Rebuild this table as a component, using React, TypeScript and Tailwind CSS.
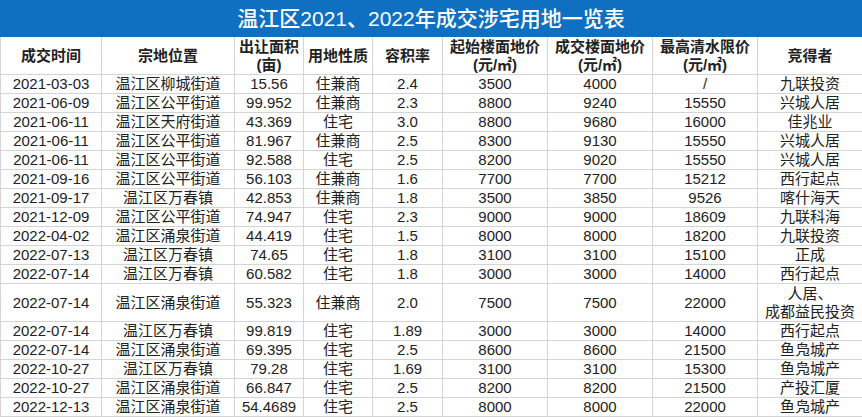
import React from "react";

type Row = [string, string, string, string, string, string, string, string, string | string[]];

const rows: Row[] = [
  ["2021-03-03", "温江区柳城街道", "15.56", "住兼商", "2.4", "3500", "4000", "/", "九联投资"],
  ["2021-06-09", "温江区公平街道", "99.952", "住兼商", "2.3", "8800", "9240", "15550", "兴城人居"],
  ["2021-06-11", "温江区天府街道", "43.369", "住宅", "3.0", "8800", "9680", "16000", "佳兆业"],
  ["2021-06-11", "温江区公平街道", "81.967", "住兼商", "2.5", "8300", "9130", "15550", "兴城人居"],
  ["2021-06-11", "温江区公平街道", "92.588", "住宅", "2.5", "8200", "9020", "15550", "兴城人居"],
  ["2021-09-16", "温江区公平街道", "56.103", "住兼商", "1.6", "7700", "7700", "15212", "西行起点"],
  ["2021-09-17", "温江区万春镇", "42.853", "住兼商", "1.8", "3500", "3850", "9526", "喀什海天"],
  ["2021-12-09", "温江区公平街道", "74.947", "住宅", "2.3", "9000", "9000", "18609", "九联科海"],
  ["2022-04-02", "温江区涌泉街道", "44.419", "住宅", "1.5", "8000", "8000", "18200", "九联投资"],
  ["2022-07-13", "温江区万春镇", "74.65", "住宅", "1.8", "3100", "3100", "15100", "正成"],
  ["2022-07-14", "温江区万春镇", "60.582", "住宅", "1.8", "3000", "3000", "14000", "西行起点"],
  ["2022-07-14", "温江区涌泉街道", "55.323", "住兼商", "2.0", "7500", "7500", "22000", ["人居、", "成都益民投资"]],
  ["2022-07-14", "温江区万春镇", "99.819", "住宅", "1.89", "3000", "3000", "14000", "西行起点"],
  ["2022-07-14", "温江区涌泉街道", "69.395", "住宅", "2.5", "8600", "8600", "21500", "鱼凫城产"],
  ["2022-10-27", "温江区万春镇", "79.28", "住宅", "1.69", "3100", "3100", "15300", "鱼凫城产"],
  ["2022-10-27", "温江区涌泉街道", "66.847", "住宅", "2.5", "8200", "8200", "21500", "产投汇厦"],
  ["2022-12-13", "温江区涌泉街道", "54.4689", "住宅", "2.5", "8000", "8000", "22000", "鱼凫城产"],
];

const headers: string[][] = [
  ["成交时间"],
  ["宗地位置"],
  ["出让面积", "(亩)"],
  ["用地性质"],
  ["容积率"],
  ["起始楼面地价", "(元/㎡)"],
  ["成交楼面地价", "(元/㎡)"],
  ["最高清水限价", "(元/㎡)"],
  ["竞得者"],
];

const cell =
  "border-r border-b border-[#d4d4d4] flex flex-col items-center justify-center text-center";

export default function App() {
  return (
    <div
      className="w-[862px] h-[417px] overflow-hidden bg-white text-[#222]"
      style={{ fontFamily: '"Liberation Sans", "Noto Sans CJK SC", sans-serif' }}
    >
      <div className="h-[37px] bg-[#0f70c2] flex items-center justify-center text-white text-[21px] font-medium">
        温江区2021、2022年成交涉宅用地一览表
      </div>
      <div className="grid grid-cols-[101px_133px_69px_69px_70px_105px_105px_105px_105px] border-l border-[#d4d4d4]">
        {headers.map((h, i) => (
          <div key={i} className={`${cell} h-[38px] text-[15px] font-bold leading-[18px]`}>
            {h.map((t, j) => (
              <span key={j}>{t}</span>
            ))}
          </div>
        ))}
        {rows.map((r, ri) => {
          const tall = Array.isArray(r[8]);
          const h = tall ? "h-[38px]" : "h-[19px]";
          return r.map((v, ci) => (
            <div key={`${ri}-${ci}`} className={`${cell} ${h} text-[15px] leading-[18px] whitespace-nowrap`}>
              {Array.isArray(v) ? v.map((t, k) => <span key={k}>{t}</span>) : v}
            </div>
          ));
        })}
      </div>
    </div>
  );
}
